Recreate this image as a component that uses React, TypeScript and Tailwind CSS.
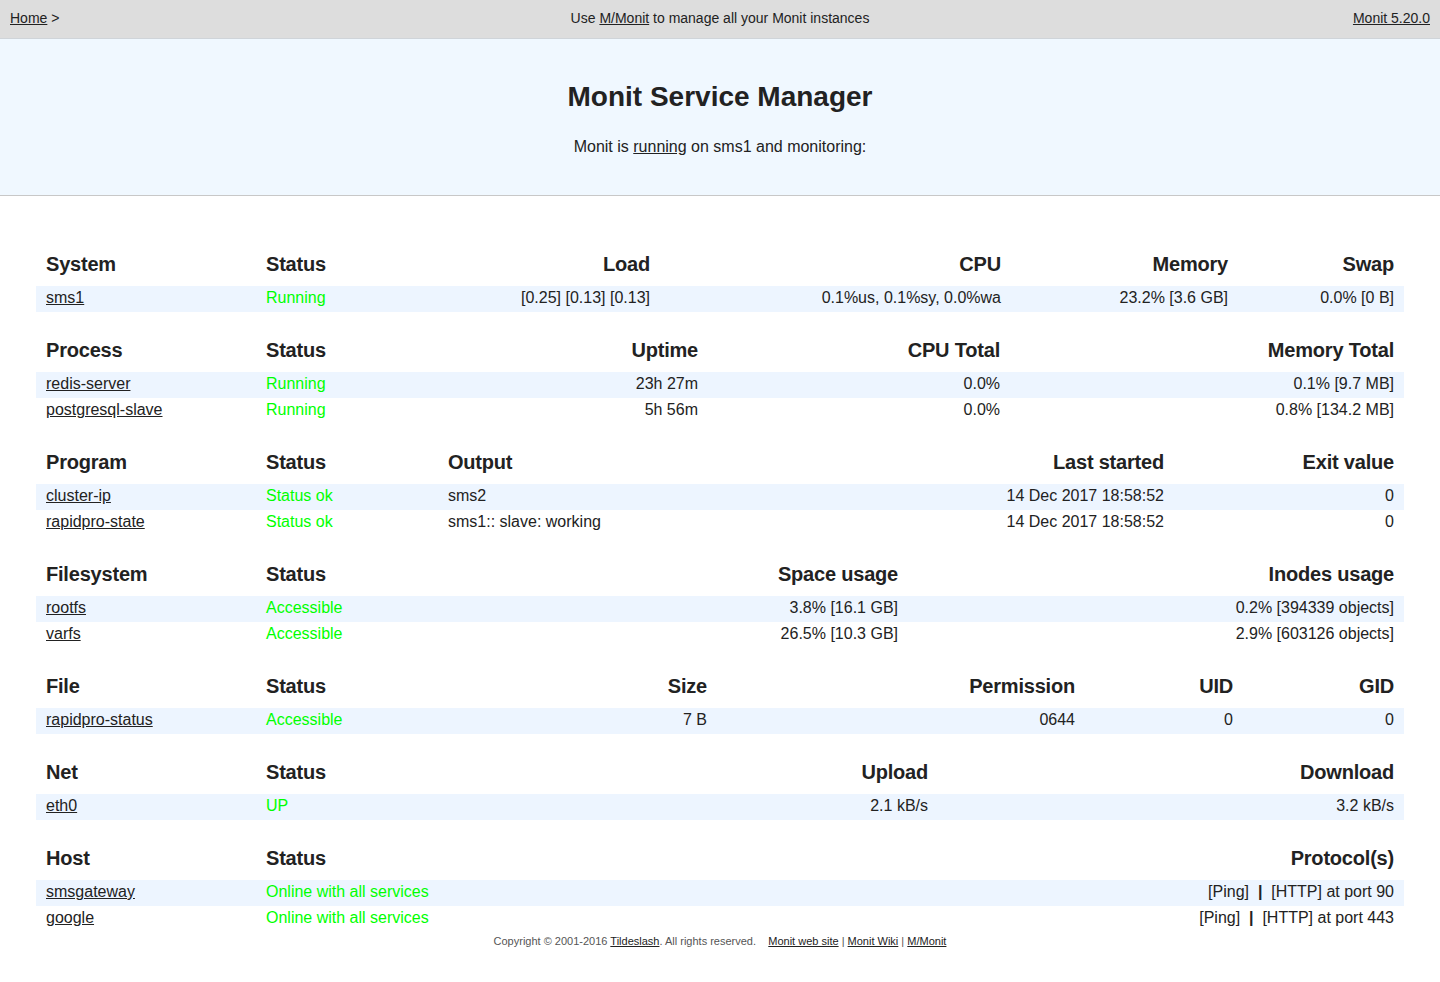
import React from "react";

type Cell = { text: React.ReactNode; link?: boolean; green?: boolean };
type Table = {
  cols: string;
  align: ("l" | "r")[];
  head: string[];
  rows: (string | Cell)[][];
};

const tables: Table[] = [
  {
    cols: "grid-cols-[220px_200px_204px_351px_227px_166px]",
    align: ["l", "l", "r", "r", "r", "r"],
    head: ["System", "Status", "Load", "CPU", "Memory", "Swap"],
    rows: [
      [
        { text: "sms1", link: true },
        { text: "Running", green: true },
        "[0.25] [0.13] [0.13]",
        "0.1%us, 0.1%sy, 0.0%wa",
        "23.2% [3.6 GB]",
        "0.0% [0 B]",
      ],
    ],
  },
  {
    cols: "grid-cols-[220px_200px_252px_302px_394px]",
    align: ["l", "l", "r", "r", "r"],
    head: ["Process", "Status", "Uptime", "CPU Total", "Memory Total"],
    rows: [
      [
        { text: "redis-server", link: true },
        { text: "Running", green: true },
        "23h 27m",
        "0.0%",
        "0.1% [9.7 MB]",
      ],
      [
        { text: "postgresql-slave", link: true },
        { text: "Running", green: true },
        "5h 56m",
        "0.0%",
        "0.8% [134.2 MB]",
      ],
    ],
  },
  {
    cols: "grid-cols-[220px_182px_436px_300px_230px]",
    align: ["l", "l", "l", "r", "r"],
    head: ["Program", "Status", "Output", "Last started", "Exit value"],
    rows: [
      [
        { text: "cluster-ip", link: true },
        { text: "Status ok", green: true },
        "sms2",
        "14 Dec 2017 18:58:52",
        "0",
      ],
      [
        { text: "rapidpro-state", link: true },
        { text: "Status ok", green: true },
        "sms1:: slave: working",
        "14 Dec 2017 18:58:52",
        "0",
      ],
    ],
  },
  {
    cols: "grid-cols-[220px_200px_452px_496px]",
    align: ["l", "l", "r", "r"],
    head: ["Filesystem", "Status", "Space usage", "Inodes usage"],
    rows: [
      [
        { text: "rootfs", link: true },
        { text: "Accessible", green: true },
        "3.8% [16.1 GB]",
        "0.2% [394339 objects]",
      ],
      [
        { text: "varfs", link: true },
        { text: "Accessible", green: true },
        "26.5% [10.3 GB]",
        "2.9% [603126 objects]",
      ],
    ],
  },
  {
    cols: "grid-cols-[220px_200px_261px_368px_158px_161px]",
    align: ["l", "l", "r", "r", "r", "r"],
    head: ["File", "Status", "Size", "Permission", "UID", "GID"],
    rows: [
      [
        { text: "rapidpro-status", link: true },
        { text: "Accessible", green: true },
        "7 B",
        "0644",
        "0",
        "0",
      ],
    ],
  },
  {
    cols: "grid-cols-[220px_200px_482px_466px]",
    align: ["l", "l", "r", "r"],
    head: ["Net", "Status", "Upload", "Download"],
    rows: [
      [
        { text: "eth0", link: true },
        { text: "UP", green: true },
        "2.1 kB/s",
        "3.2 kB/s",
      ],
    ],
  },
  {
    cols: "grid-cols-[220px_400px_748px]",
    align: ["l", "l", "r"],
    head: ["Host", "Status", "Protocol(s)"],
    rows: [
      [
        { text: "smsgateway", link: true },
        { text: "Online with all services", green: true },
        {
          text: (
            <>
              [Ping]&nbsp;&nbsp;<b>|</b>&nbsp;&nbsp;[HTTP] at port 90
            </>
          ),
        },
      ],
      [
        { text: "google", link: true },
        { text: "Online with all services", green: true },
        {
          text: (
            <>
              [Ping]&nbsp;&nbsp;<b>|</b>&nbsp;&nbsp;[HTTP] at port 443
            </>
          ),
        },
      ],
    ],
  },
];

function renderCell(c: string | Cell, align: "l" | "r", key: number) {
  const cell: Cell = typeof c === "string" ? { text: c } : c;
  const alignCls = align === "r" ? "text-right" : "text-left";
  let content: React.ReactNode = cell.text;
  if (cell.link) content = <a className="underline text-[#222]">{cell.text}</a>;
  return (
    <div
      key={key}
      className={`px-[10px] whitespace-nowrap ${alignCls} ${cell.green ? "text-[#00ff00]" : ""}`}
    >
      {content}
    </div>
  );
}

export default function App() {
  return (
    <div
      className="min-h-[982px] bg-white text-[#222]"
      style={{ fontFamily: '"Liberation Sans", Arial, Helvetica, sans-serif' }}
    >
      <div className="h-[39px] bg-[#dddddd] border-b border-[#cfd4d9] grid grid-cols-[1fr_auto_1fr] items-center px-[10px] text-[14px] leading-[16px] pb-[2px]">
        <div>
          <a className="underline">Home</a> &gt;
        </div>
        <div>
          Use <a className="underline">M/Monit</a> to manage all your Monit instances
        </div>
        <div className="text-right">
          <a className="underline">Monit 5.20.0</a>
        </div>
      </div>
      <div className="h-[157px] bg-[#f0f8ff] border-b border-[#c8c8c8] flex flex-col items-center">
        <h1 className="text-[28px] font-bold leading-[32px] mt-[42px]">Monit Service Manager</h1>
        <p className="text-[16px] leading-[20px] mt-[24px]">
          Monit is <a className="underline">running</a> on sms1 and monitoring:
        </p>
      </div>
      <div className="px-[36px] pt-[30px]">
        {tables.map((t, ti) => (
          <div key={ti} className="mt-[22px]">
            <div className={`grid ${t.cols} pt-[4px] pb-[10px] text-[20px] font-bold leading-[24px] tracking-[-0.2px]`}>
              {t.head.map((h, hi) => (
                <div
                  key={hi}
                  className={`px-[10px] whitespace-nowrap ${t.align[hi] === "r" ? "text-right" : "text-left"}`}
                >
                  {h}
                </div>
              ))}
            </div>
            {t.rows.map((r, ri) => (
              <div
                key={ri}
                className={`grid ${t.cols} h-[26px] items-center text-[16px] leading-[24px] pb-[2px] ${ri % 2 === 0 ? "bg-[#edf5ff]" : ""}`}
              >
                {r.map((c, ci) => renderCell(c, t.align[ci], ci))}
              </div>
            ))}
          </div>
        ))}
        <div className="text-center text-[11px] leading-[13px] text-[#555] mt-[3px]">
          Copyright © 2001-2016 <a className="underline text-[#222]">Tildeslash</a>. All rights reserved.
          &nbsp;&nbsp;&nbsp;<a className="underline text-[#222]">Monit web site</a> |{" "}
          <a className="underline text-[#222]">Monit Wiki</a> |{" "}
          <a className="underline text-[#222]">M/Monit</a>
        </div>
      </div>
    </div>
  );
}
